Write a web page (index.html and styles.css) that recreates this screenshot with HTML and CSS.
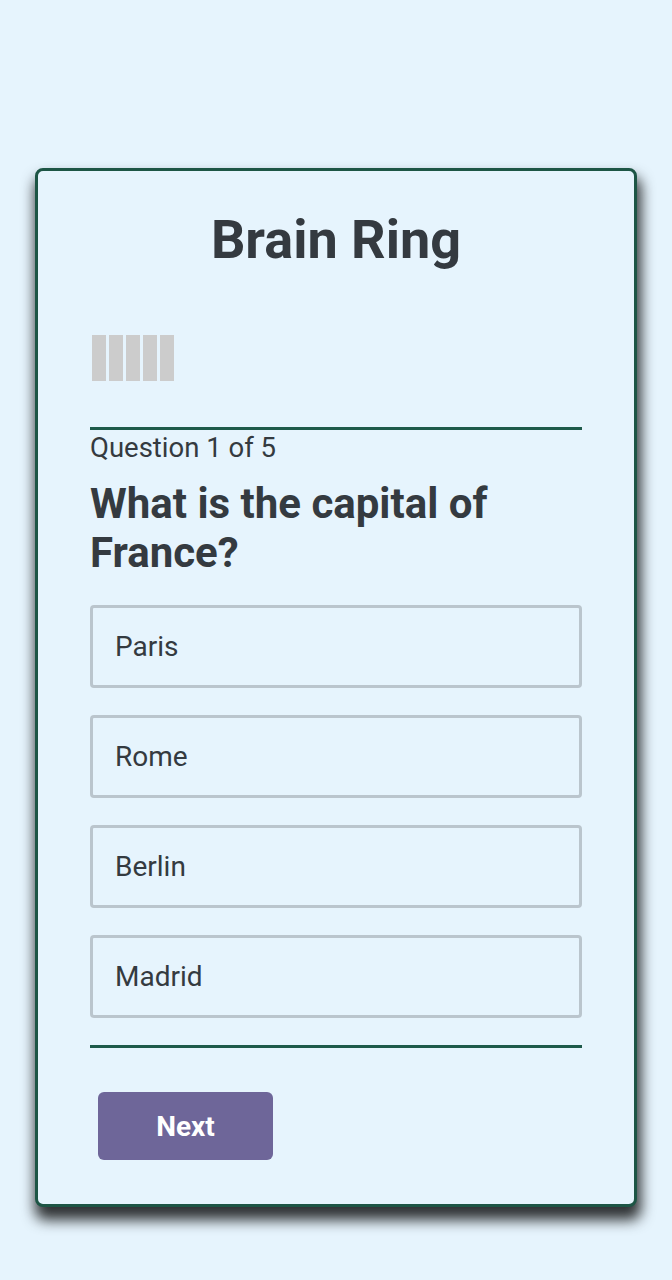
FILE: index.html
```html
<!DOCTYPE html>
<html lang="en">
<head>
<meta charset="utf-8">
<title>Brain Ring</title>
<link rel="stylesheet" href="styles.css">
</head>
<body>
<main class="card">
  <h1 class="title">Brain Ring</h1>
  <div class="progress">
    <span class="bar"></span><span class="bar"></span><span class="bar"></span><span class="bar"></span><span class="bar"></span>
  </div>
  <hr class="rule">
  <p class="counter">Question 1 of 5</p>
  <h2 class="question">What is the capital of France?</h2>
  <div class="options">
    <button class="option">Paris</button>
    <button class="option">Rome</button>
    <button class="option">Berlin</button>
    <button class="option">Madrid</button>
  </div>
  <hr class="rule rule-bottom">
  <button class="next">Next</button>
</main>
</body>
</html>
```
FILE: styles.css
```css
html, body {
  margin: 0;
  padding: 0;
  background: #e6f4fd;
  font-family: Roboto, "Liberation Sans", sans-serif;
  color: #343a40;
}
body {
  padding-top: 168px;
  padding-bottom: 60px;
}
.card {
  box-sizing: border-box;
  width: 602px;
  margin: 0 0 0 35px;
  border: 3px solid #1d5545;
  border-radius: 8px;
  background: #e6f4fd;
  box-shadow: 2px 11px 14px 2px rgba(0, 0, 0, 0.8);
  padding: 35px 52px 44px 52px;
  display: flex;
  flex-direction: column;
}
.title {
  margin: 0;
  text-align: center;
  font-size: 54px;
  line-height: 67px;
  font-weight: 700;
}
.progress {
  display: flex;
  gap: 3px;
  margin: 62px 0 0 2px;
}
.bar {
  width: 14px;
  height: 46px;
  background: #cccccc;
}
.rule {
  margin: 46px 0 0 0;
  border: 0;
  height: 3px;
  background: #1e5a4a;
}
.counter {
  margin: 2px 0 0 0;
  font-size: 27.5px;
  line-height: 31px;
}
.question {
  margin: 16px 0 0 0;
  font-size: 42px;
  line-height: 49px;
  font-weight: 700;
}
.options {
  margin-top: 28px;
  display: flex;
  flex-direction: column;
  gap: 27px;
}
.option {
  box-sizing: border-box;
  height: 83px;
  width: 100%;
  text-align: left;
  padding: 0 0 0 22px;
  border: 3px solid #bac5cd;
  border-radius: 4px;
  background: #e6f4fd;
  font-family: Roboto, "Liberation Sans", sans-serif;
  font-size: 28px;
  color: #343a40;
}
.rule-bottom {
  margin-top: 27px;
}
.next {
  align-self: flex-start;
  margin: 44px 0 0 8px;
  width: 175px;
  height: 68px;
  border: 0;
  border-radius: 6px;
  background: #6e6699;
  color: #ffffff;
  font-family: Roboto, "Liberation Sans", sans-serif;
  font-size: 28px;
  font-weight: 700;
}
```
